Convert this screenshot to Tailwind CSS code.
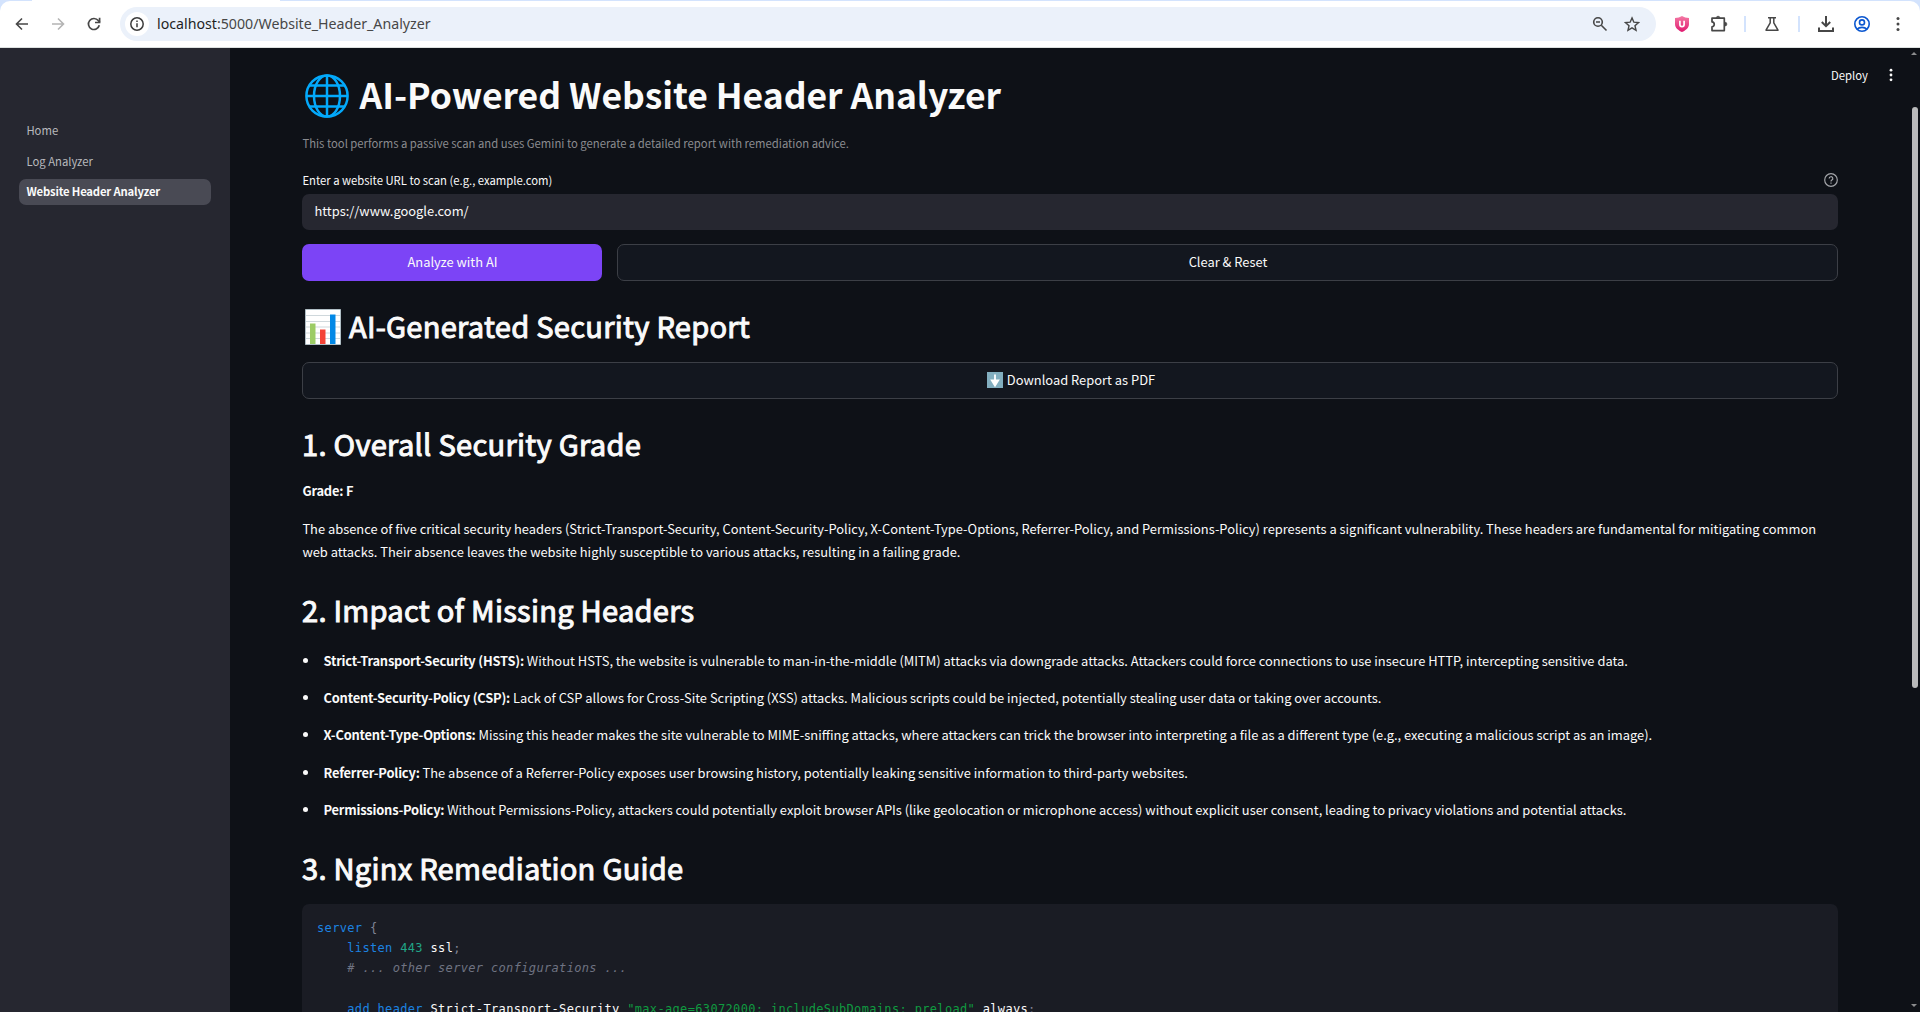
<!DOCTYPE html>
<html lang="en">
<head>
<meta charset="utf-8">
<title>Website Header Analyzer</title>
<script src="https://cdn.jsdelivr.net/npm/@tailwindcss/browser@4"></script>
</head>
<body class="h-[1012px] w-[1920px] overflow-hidden bg-[#0e1117] font-['Noto_Sans_CJK_SC',sans-serif] text-[#fafafa]">
<div class="flex h-full flex-col overflow-hidden">

  <!-- Browser toolbar -->
  <header class="h-12 shrink-0 bg-[#d3e3fd]">
    <div class="flex h-px"><span class="ml-8 w-[248px] bg-white"></span></div>
    <div class="flex h-[47px] items-center rounded-t-[10px] border-b border-[#dde1e0] bg-white pb-px text-[#474747]">
      <svg class="ml-[14px] size-4" viewBox="0 0 16 16" fill="none" stroke="currentColor" stroke-width="1.6"><path d="M14 8H3M8 2.5 2.5 8 8 13.5"/></svg>
      <svg class="ml-5 size-4 text-[#b4b4b4]" viewBox="0 0 16 16" fill="none" stroke="currentColor" stroke-width="1.6"><path d="M2 8h11M8 2.5 13.5 8 8 13.5"/></svg>
      <svg class="ml-5 size-4" viewBox="0 0 16 16" fill="none" stroke="currentColor" stroke-width="1.7"><path d="M13.3 9.3A5.500 5.500 0 1 1 12.300 4.600L13.800 6.200"/><path d="M13.600 1.800v4.700H9"/></svg>
      <div class="ml-[18px] flex h-[34px] w-[1536px] items-center rounded-full bg-[#ebf1fa] pl-[5px] pr-4">
        <span class="flex size-6 items-center justify-center rounded-full bg-white">
          <svg class="size-4" viewBox="0 0 16 16" fill="none" stroke="#3c3c3c" stroke-width="1.5"><circle cx="8" cy="8" r="6.2"/><path d="M8 7.200v4M8 4.600v1.500"/></svg>
        </span>
        <span class="ml-2 font-['Noto_Sans',sans-serif] text-[14.2px] leading-5 text-[#474747]"><span class="text-[#1f1f1f]">localhost</span>:5000/Website_Header_Analyzer</span>
        <svg class="ml-auto size-4" viewBox="0 0 16 16" fill="none" stroke="currentColor" stroke-width="1.6"><circle cx="6" cy="6" r="4.3"/><path d="m9.300 9.300 5.200 5.200M4 6h4"/></svg>
        <svg class="ml-4 size-4" viewBox="0 0 16 16" fill="none" stroke="currentColor" stroke-width="1.4"><path d="m8 1.900 1.850 4.300 4.650.4-3.530 3.070 1.060 4.560L8 11.800l-4.030 2.430 1.060-4.560L1.500 6.600l4.650-.4z"/></svg>
      </div>
      <svg class="ml-[18px] size-4" viewBox="0 0 16 16"><defs><linearGradient id="shield" x1="0" y1="0" x2="0" y2="1"><stop offset="0" stop-color="#f47ba5"/><stop offset="1" stop-color="#e0186f"/></linearGradient></defs><path d="M8 0c2 1.300 4.500 2 7 2v6c0 4-3.500 6.500-7 8-3.500-1.500-7-4-7-8V2c2.500 0 5-.7 7-2z" fill="url(#shield)"/><path d="M5.900 4.800v3.700a2.100 2.100 0 0 0 4.200 0V4.800" fill="none" stroke="#fff" stroke-width="1.7"/></svg>
      <svg class="ml-5 size-[18px]" viewBox="0 0 18 18" fill="none" stroke="currentColor" stroke-width="1.7"><path d="M2 3.200h12.300v12.400H2v-3.700c3-.4 3-4.700 0-5z" stroke-linejoin="round"/><path d="M6.200 2.600a2 2 0 0 1 3.800 0zM15 7.200a1.900 1.900 0 0 1 0 3.800z" fill="currentColor" stroke-width=".6"/></svg>
      <span class="ml-4 h-4 w-0.5 bg-[#d3e3fd]"></span>
      <svg class="ml-[18px] size-4" viewBox="0 0 16 16" fill="none" stroke="currentColor" stroke-width="1.5"><path d="M4 1.700h8M6.200 1.700v5.100L2 14.200h12L9.800 6.800V1.700" stroke-linejoin="round"/></svg>
      <span class="ml-[18px] h-4 w-0.5 bg-[#d3e3fd]"></span>
      <svg class="ml-[18px] size-4" viewBox="0 0 16 16" fill="none" stroke="currentColor" stroke-width="2"><path d="M8 0v10M3.800 6 8 10.200 12.200 6M1 11.500V15h14v-3.500"/></svg>
      <svg class="ml-5 size-4" viewBox="0 0 16 16" fill="none" stroke="#0b57d0" stroke-width="1.6"><circle cx="8" cy="8" r="7.2"/><circle cx="8" cy="6.4" r="2.5"/><path d="M3 13.300c2.500-2.600 7.500-2.600 10 0"/></svg>
      <svg class="ml-5 size-4" viewBox="0 0 16 16" fill="currentColor"><circle cx="8" cy="2.6" r="1.5"/><circle cx="8" cy="8" r="1.5"/><circle cx="8" cy="13.4" r="1.5"/></svg>
    </div>
  </header>

  <div class="relative flex min-h-0 flex-1">
    <!-- Sidebar -->
    <nav class="flex w-[230px] shrink-0 flex-col gap-[5px] bg-[#262730] px-[19px] pt-[70px] text-[11.3px] leading-[25px] text-[#b8b9bd]">
      <a class="h-[26px] rounded-[7px] px-[7.4px]">Home</a>
      <a class="h-[26px] rounded-[7px] px-[7.4px]">Log Analyzer</a>
      <a class="-mt-px h-[26px] rounded-[7px] bg-[#494a54] px-[7.4px] font-bold tracking-[-0.18px] text-[#fafafa]">Website Header Analyzer</a>
    </nav>

    <!-- Report -->
    <main class="flex w-[1608px] flex-col pl-[72px] text-[12.9px]">
      <h1 class="mt-[22px] flex h-12 shrink-0 items-center text-[35.5px] font-bold leading-[48px]">
        <svg class="ml-[3px] mr-[10.5px] mt-[3px] size-11" viewBox="0 0 44 44" fill="none" stroke="#03a9fb" stroke-width="2.5"><circle cx="22" cy="22" r="20.6"/><ellipse cx="22" cy="22" rx="13" ry="20.6"/><path d="M22 1.500v41M1.500 22h41M5 11.600h34M5 32.400h34"/></svg>
        <span class="tracking-[-0.04px]">AI-Powered Website Header Analyzer</span>
      </h1>
      <p class="mt-[15px] h-5 shrink-0 pl-[0.4px] text-[11.3px] leading-5 tracking-[-0.01px] text-[#8b8c90]">This tool performs a passive scan and uses Gemini to generate a detailed report with remediation advice.</p>
      <div class="mt-[16.5px] flex h-5 shrink-0 items-center justify-between pl-[0.4px] text-[11.3px] leading-5">
        <label class="tracking-[-0.01px]">Enter a website URL to scan (e.g., example.com)</label>
        <svg class="size-[14px]" viewBox="0 0 14 14" fill="none" stroke="#a3a5a9" stroke-width="1.2"><circle cx="7" cy="7" r="6.3"/><path d="M5.200 5.600a1.800 1.800 0 1 1 2.700 1.500c-.6.400-.9.700-.9 1.300M7 9.500v1.200"/></svg>
      </div>
      <div class="mt-[4.5px] h-9 shrink-0 rounded-[7px] bg-[#262730] px-[12.4px] leading-[34px]">https://www.google.com/</div>
      <div class="mt-[14px] flex h-[36.5px] shrink-0 gap-[15px] text-center leading-[34px]">
        <button class="w-[300px] rounded-[7px] bg-[#7c44f6] pl-px">Analyze with AI</button>
        <button class="flex-1 rounded-[7px] border border-[#3c3f46] bg-[#13171f] pl-px">Clear &amp; Reset</button>
      </div>
      <h2 class="mt-[24.5px] flex h-10 shrink-0 items-center text-[29.1px] leading-10 tracking-[0.25px] [-webkit-text-stroke:1px_#fafafa]">
        <svg class="ml-[3px] mr-[8px] mt-[3px] size-9" viewBox="0 0 36 36"><path d="M.5.500h35v35H.5z" fill="#fff" stroke="#b0bec5"/><path d="M1 6.500h34M1 12.500h34M1 18h34M1 24h34M1 29.500h34" stroke="#cfd8dc"/><path d="M5 14.500h5.500V35H5z" fill="#9ccc65"/><path d="M15 20.500h5.500V35H15z" fill="#f44336"/><path d="M25 5.500h5.500V35H25z" fill="#0288e6"/></svg>
        <span>AI-Generated Security Report</span>
      </h2>
      <button class="mt-[17px] flex h-[36.5px] shrink-0 items-center justify-center rounded-[7px] border border-[#3c3f46] bg-[#13171f] pb-px pl-0.5">
        <svg class="mr-1 size-4" viewBox="0 0 16 16"><path d="M0 0h16v16H0z" fill="#82aebf"/><path d="M8 2.500v8M4.800 8.500h6.400L8 13.500z" fill="#fff" stroke="#fff" stroke-width="1.8"/></svg>
        <span>Download Report as PDF</span>
      </button>
      <h2 class="mt-[24.5px] h-10 shrink-0 text-[29.1px] leading-10 tracking-[0.27px] [-webkit-text-stroke:1px_#fafafa]">1. Overall Security Grade</h2>
      <p class="mt-[16.5px] h-[22px] shrink-0 pl-[0.4px] font-bold leading-[22px] tracking-[-0.2px]">Grade: F</p>
      <p class="mt-[15.5px] shrink-0 whitespace-nowrap pl-[0.4px] leading-[23px] tracking-[-0.004px]">The absence of five critical security headers (Strict-Transport-Security, Content-Security-Policy, X-Content-Type-Options, Referrer-Policy, and Permissions-Policy) represents a significant vulnerability. These headers are fundamental for mitigating common<br>web attacks. Their absence leaves the website highly susceptible to various attacks, resulting in a failing grade.</p>
      <h2 class="mt-[25.5px] h-10 shrink-0 text-[29.1px] leading-10 tracking-[0.25px] [-webkit-text-stroke:1px_#fafafa]">2. Impact of Missing Headers</h2>
      <ul class="mt-[20px] flex shrink-0 flex-col gap-[14.4px] whitespace-nowrap leading-[23px]">
        <li class="flex h-[23px] items-center"><i class="ml-px mr-[15.5px] size-[5px] rounded-full bg-[#fafafa]"></i><span><b class="tracking-[-0.21px]">Strict-Transport-Security (HSTS):</b> Without HSTS, the website is vulnerable to man-in-the-middle (MITM) attacks via downgrade attacks. Attackers could force connections to use insecure HTTP, intercepting sensitive data.</span></li>
        <li class="flex h-[23px] items-center"><i class="ml-px mr-[15.5px] size-[5px] rounded-full bg-[#fafafa]"></i><span><b class="tracking-[-0.21px]">Content-Security-Policy (CSP):</b> Lack of CSP allows for Cross-Site Scripting (XSS) attacks. Malicious scripts could be injected, potentially stealing user data or taking over accounts.</span></li>
        <li class="flex h-[23px] items-center"><i class="ml-px mr-[15.5px] size-[5px] rounded-full bg-[#fafafa]"></i><span><b class="tracking-[-0.21px]">X-Content-Type-Options:</b> Missing this header makes the site vulnerable to MIME-sniffing attacks, where attackers can trick the browser into interpreting a file as a different type (e.g., executing a malicious script as an image).</span></li>
        <li class="flex h-[23px] items-center"><i class="ml-px mr-[15.5px] size-[5px] rounded-full bg-[#fafafa]"></i><span><b class="tracking-[-0.21px]">Referrer-Policy:</b> The absence of a Referrer-Policy exposes user browsing history, potentially leaking sensitive information to third-party websites.</span></li>
        <li class="flex h-[23px] items-center"><i class="ml-px mr-[15.5px] size-[5px] rounded-full bg-[#fafafa]"></i><span><b class="tracking-[-0.21px]">Permissions-Policy:</b> Without Permissions-Policy, attackers could potentially exploit browser APIs (like geolocation or microphone access) without explicit user consent, leading to privacy violations and potential attacks.</span></li>
      </ul>
      <h2 class="mt-[26px] h-10 shrink-0 text-[29.1px] leading-10 tracking-[0.25px] [-webkit-text-stroke:1px_#fafafa]">3. Nginx Remediation Guide</h2>
      <pre class="mt-[17px] h-[160px] shrink-0 rounded-[7px] bg-[#1a1c24] pl-[15px] pt-[13.5px] font-['DejaVu_Sans_Mono',monospace] text-[12px] leading-[20.35px] tracking-[0.34px]"><span class="text-[#1c83e1]">server</span> <span class="text-[#808495]">{</span>
    <span class="text-[#1c83e1]">listen</span> <span class="text-[#21a587]">443</span> ssl<span class="text-[#808495]">;</span>
    <span class="italic text-[#6f7382]"># ... other server configurations ...</span>

    <span class="text-[#1c83e1]">add_header</span> Strict-Transport-Security <span class="text-[#109a40]">"max-age=63072000; includeSubDomains; preload"</span> always<span class="text-[#808495]">;</span></pre>
    </main>

    <!-- App menu, over the page -->
    <div class="absolute right-[22px] top-[14.5px] flex h-6 items-center gap-4 text-[11.3px] leading-6">
      <span>Deploy</span>
      <svg class="size-[14px]" viewBox="0 0 14 14" fill="#fafafa"><circle cx="7" cy="2.2" r="1.4"/><circle cx="7" cy="7" r="1.4"/><circle cx="7" cy="11.8" r="1.4"/></svg>
    </div>

    <!-- Scrollbar -->
    <div class="absolute inset-y-0 right-0 flex w-2 flex-col items-center">
      <i class="mr-1 mt-1 h-0 w-0 border-x-[3px] border-b-[3px] border-x-transparent border-b-[#8b8c8e]"></i>
      <i class="mr-0.5 mt-[52px] h-[581px] w-1.5 shrink-0 rounded-full bg-[#b9babb]"></i>
      <i class="mb-[5px] mr-1 mt-auto h-0 w-0 border-x-[3px] border-t-[3px] border-x-transparent border-t-[#8b8c8e]"></i>
    </div>
  </div>
</div>
</body>
</html>
